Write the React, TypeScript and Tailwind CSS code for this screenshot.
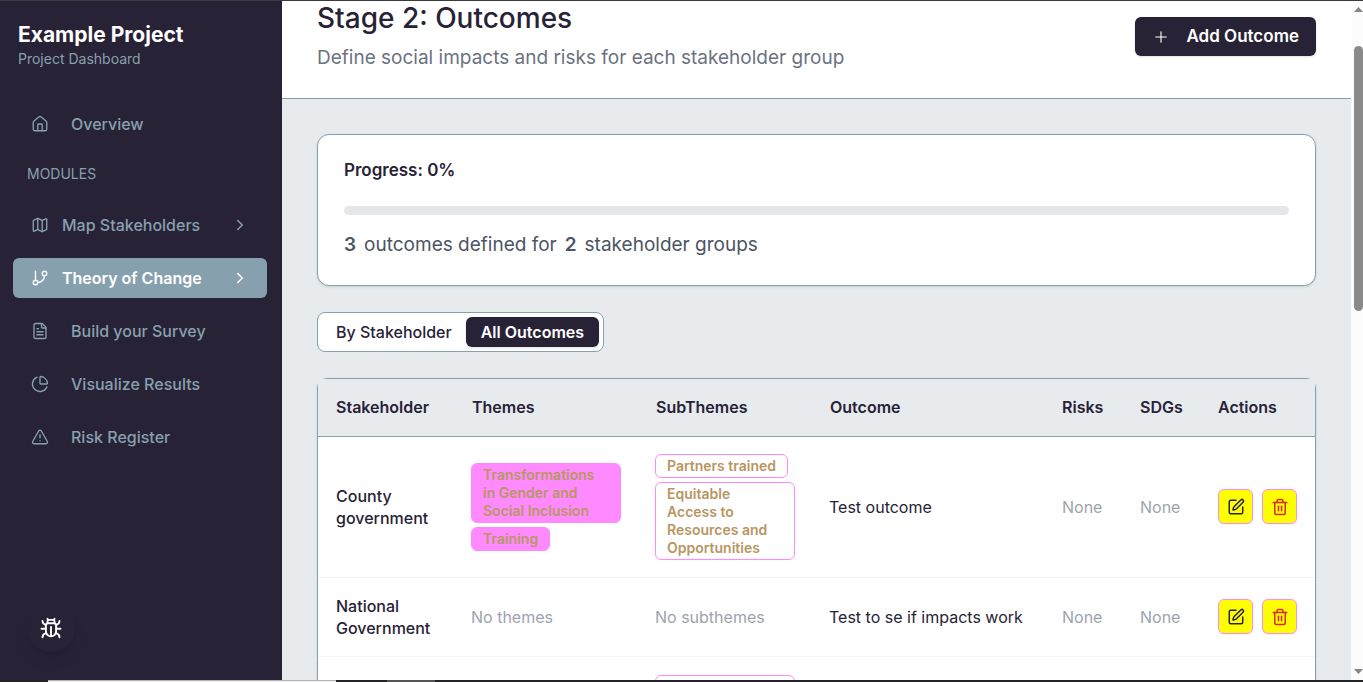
import React from "react";
import { House, Map, GitBranch, FileText, ChartPie, TriangleAlert, ChevronRight, Plus, SquarePen, Trash2 } from "lucide-react";

const modules = [
  { label: "Map Stakeholders", icon: Map, expandable: true, active: false },
  { label: "Theory of Change", icon: GitBranch, expandable: true, active: true },
  { label: "Build your Survey", icon: FileText, expandable: false, active: false },
  { label: "Visualize Results", icon: ChartPie, expandable: false, active: false },
  { label: "Risk Register", icon: TriangleAlert, expandable: false, active: false },
];

const outcomes = [
  {
    stakeholder: "County government",
    themes: ["Transformations in Gender and Social Inclusion", "Training"],
    subthemes: ["Partners trained", "Equitable Access to Resources and Opportunities"],
    outcome: "Test outcome",
  },
  { stakeholder: "National Government", themes: [], subthemes: [], outcome: "Test to se if impacts work" },
];

function BugIcon() {
  return (
    <svg width="22" height="22" viewBox="0 0 22 22" fill="none" stroke="currentColor" strokeWidth="1.9" strokeLinecap="round" strokeLinejoin="round">
      <path d="M7.500 1.800 8 2.800M14.500 1.800 14 2.800M7.500 5.800V4.200Q7.500 2.900 8.800 2.900h4.400Q14.500 2.900 14.500 4.200v1.600" />
      <path d="M5.900 8.500Q5.900 6.200 8.200 6.200h5.600Q16.100 6.200 16.100 8.500v5.700a5.100 5.100 0 0 1-10.200 0zM11 10v8.500" />
      <path d="M1.500 11.800H5.500M16.500 11.800h4M2.500 4q.2 3 3.200 3.800M19.500 4q-.2 3-3.200 3.800M2.500 20.200q.2-3.200 3.500-4M19.500 20.200q-.2-3.200-3.500-4" />
    </svg>
  );
}

function Sidebar() {
  return (
    <aside className="flex w-[282px] shrink-0 flex-col bg-[#282236] text-[#87a0ae]">
      <div className="px-[18px] pt-5">
        <h2 className="text-[21px] leading-7 font-bold text-white">Example Project</h2>
        <p className="text-[14px] leading-5">Project Dashboard</p>
      </div>
      <nav className="flex flex-col pt-[35px] pr-[15px] pl-[13px] text-[16px] font-medium">
        <a href="#overview" className="flex h-10 items-center gap-[22px] px-[18px]">
          <House size={18} strokeWidth={1.8} />
          Overview
        </a>
        <h3 className="px-[14px] pt-5 pb-[21px] text-[14px] leading-5 font-normal">MODULES</h3>
        <ul className="flex flex-col gap-[13px]">
          {modules.map(({ label, icon: Icon, expandable, active }) => (
            <li key={label}>
              {expandable ? (
                <button
                  className={
                    active
                      ? "flex h-10 w-full items-center gap-[13px] rounded-md bg-[#87a0ae] px-[18px] text-left font-semibold text-white"
                      : "flex h-10 w-full items-center gap-[13px] rounded-md px-[18px] text-left"
                  }
                >
                  <Icon size={18} strokeWidth={1.8} />
                  <span className="flex-1">{label}</span>
                  <ChevronRight size={18} strokeWidth={2} />
                </button>
              ) : (
                <a href="#module" className="flex h-10 items-center gap-[22px] px-[18px]">
                  <Icon size={18} strokeWidth={1.8} />
                  {label}
                </a>
              )}
            </li>
          ))}
        </ul>
      </nav>
      <button aria-label="Report a bug" className="mt-auto mb-7 ml-[27px] flex size-12 items-center justify-center rounded-full text-white shadow-lg">
        <BugIcon />
      </button>
    </aside>
  );
}

function Tags({ items, filled, empty }: { items: string[]; filled?: boolean; empty: string }) {
  if (items.length === 0) return <span className="text-[#9ca3af]">{empty}</span>;
  return (
    <div className="flex flex-col items-start gap-1">
      {items.map((item) => (
        <span
          key={item}
          className={
            filled
              ? "rounded-md border border-[#ff8aff] bg-[#ff8aff] px-[11px] py-[2px] text-[14px] leading-[18px] font-semibold text-[#b89662]"
              : "rounded-md border border-[#ff8aff] px-[11px] py-[2px] text-[14px] leading-[18px] font-semibold text-[#b89662]"
          }
        >
          {item}
        </span>
      ))}
    </div>
  );
}

function OutcomeTable() {
  return (
    <div className="rounded-t-[10px] border border-b-0 border-[#87a0ae] bg-white shadow-sm">
      <table className="w-full table-fixed border-collapse text-left text-[16px] leading-[22px] text-[#282236]">
        <colgroup>
          <col className="w-[136px]" />
          <col className="w-[184px]" />
          <col className="w-[174px]" />
          <col />
          <col className="w-[78px]" />
          <col className="w-[78px]" />
          <col className="w-[115px]" />
        </colgroup>
        <thead>
          <tr className="h-[57px] border-b border-[#87a0ae] bg-[#e7ebee]">
            {["Stakeholder", "Themes", "SubThemes", "Outcome", "Risks", "SDGs", "Actions"].map((name) => (
              <th key={name} className="pr-4 pl-[18px] font-semibold">{name}</th>
            ))}
          </tr>
        </thead>
        <tbody>
          {outcomes.map((row) => (
            <tr key={row.stakeholder} className="h-[79px] border-b border-[#f3f4f6]">
              <td className="py-[17px] pr-4 pl-[18px] font-medium">{row.stakeholder}</td>
              <td className="px-[17px] py-[17px]"><Tags items={row.themes} filled empty="No themes" /></td>
              <td className="px-[17px] py-[17px]"><Tags items={row.subthemes} empty="No subthemes" /></td>
              <td className="px-[17px]">{row.outcome}</td>
              <td className="pl-[18px] text-[#9ca3af]">None</td>
              <td className="pl-[18px] text-[#9ca3af]">None</td>
              <td className="pl-[18px]">
                <div className="flex gap-[9px]">
                  <button aria-label="Edit outcome" className="flex size-[35px] items-center justify-center rounded-md border border-[#ff8aff] bg-[#ffff00] shadow-xs">
                    <SquarePen size={18} strokeWidth={2} />
                  </button>
                  <button aria-label="Delete outcome" className="flex size-[35px] items-center justify-center rounded-md border border-[#ff8aff] bg-[#ffff00] text-[#dc2626] shadow-xs">
                    <Trash2 size={18} strokeWidth={2} />
                  </button>
                </div>
              </td>
            </tr>
          ))}
          <tr>
            <td colSpan={2} />
            <td className="px-[17px] py-[18px]"><div className="h-[60px] rounded-md border border-[#ff8aff]" /></td>
            <td colSpan={4} />
          </tr>
        </tbody>
      </table>
    </div>
  );
}

export default function App() {
  return (
    <div className="flex h-screen flex-col overflow-hidden border-t border-[#3a393d] bg-[#e7ebee] font-['Inter',sans-serif]">
      <div className="flex min-h-0 flex-1">
        <Sidebar />
        <main className="min-w-0 flex-1 overflow-hidden">
          <header className="flex items-start justify-between border-b border-[#87a0ae] bg-white px-[35px] pb-[26px]">
            <div>
              <h1 className="text-[28px] leading-[34px] font-medium text-[#282236]">Stage 2: Outcomes</h1>
              <p className="pt-[9px] text-[19px] leading-7 text-[#6b7280]">Define social impacts and risks for each stakeholder group</p>
            </div>
            <button className="mt-4 flex h-[39px] items-center gap-4 rounded-md bg-[#282236] px-[17px] text-[17px] font-semibold text-white shadow-sm">
              <Plus size={18} strokeWidth={1.5} />
              Add Outcome
            </button>
          </header>
          <div className="flex flex-col gap-[26px] px-[35px] pt-[35px]">
            <section className="rounded-xl border border-[#87a0ae] bg-white px-[26px] py-[21px] shadow-sm">
              <h2 className="text-[17px] leading-7 font-semibold text-[#282236]">Progress: 0%</h2>
              <div role="progressbar" aria-label="Progress" aria-valuenow={0} className="mt-[22px] h-[9px] rounded-full bg-[#e5e7eb]" />
              <p className="flex gap-2 pt-4 pb-[5px] text-[19px] leading-7 text-[#4b5563]">
                <strong className="font-semibold">3</strong> outcomes defined for <strong className="font-semibold">2</strong> stakeholder groups
              </p>
            </section>
            <div className="flex h-10 items-center self-start rounded-lg border border-[#87a0ae] bg-white px-1 text-[16px] font-medium text-[#282236]">
              <button className="h-[30px] px-[14px]">By Stakeholder</button>
              <button className="h-[30px] rounded-md bg-[#282236] px-[15px] font-semibold text-white shadow-sm">All Outcomes</button>
            </div>
            <OutcomeTable />
          </div>
        </main>
        <div aria-hidden="true" className="flex w-3 shrink-0 flex-col items-end justify-between bg-[#fcfcfc] pt-[6px] pb-[6px]">
          <svg width="9" height="5" viewBox="0 0 9 5" fill="#858585"><path d="M0 5 4.500 0 9 5z" /></svg>
          <div className="mt-[34px] mb-auto h-[265px] w-[9px] rounded-full bg-[#8a8a8a]" />
          <svg width="9" height="5" viewBox="0 0 9 5" fill="#858585"><path d="M0 0 4.500 5 9 0z" /></svg>
        </div>
      </div>
      <div className="flex h-[2px] shrink-0 bg-[#242326]">
        <div className="ml-12 w-72 border-t border-[#b5b5b5] bg-[#eeeeee]" />
        <div className="ml-[51px] w-12 bg-[#555555]" />
      </div>
    </div>
  );
}
